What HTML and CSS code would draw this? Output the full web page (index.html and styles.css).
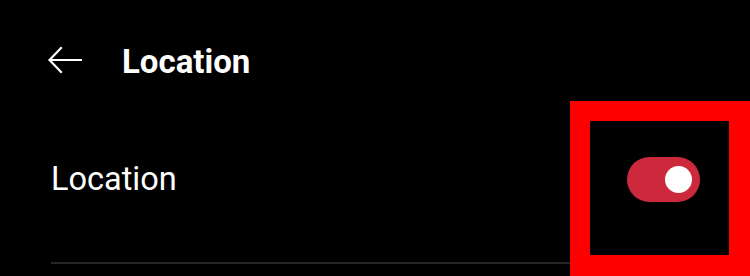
FILE: index.html
```html
<!DOCTYPE html>
<html>
<head>
<meta charset="utf-8">
<link rel="stylesheet" href="styles.css">
</head>
<body>
<div class="screen">
  <header class="topbar">
    <svg class="back" width="34" height="28" viewBox="0 0 34 28" fill="none" stroke="#fff" stroke-width="2.2" stroke-linecap="square">
      <path d="M2 14 H33"/>
      <path d="M13 2 L1.5 14 L13 26"/>
    </svg>
    <h1 class="title">Location</h1>
  </header>
  <div class="list">
    <div class="row">
      <span class="label">Location</span>
      <div class="switch on"><div class="knob"></div></div>
    </div>
    <div class="divider"></div>
  </div>
  <div class="highlight"></div>
</div>
</body>
</html>
```
FILE: styles.css
```css
html, body {
  margin: 0;
  padding: 0;
  background: #000;
}
.screen {
  position: relative;
  width: 750px;
  height: 276px;
  overflow: hidden;
  font-family: Roboto, "Liberation Sans", sans-serif;
  color: #fff;
}
.topbar {
  height: 120px;
  display: flex;
  align-items: center;
  padding-left: 48px;
  box-sizing: border-box;
}
.back {
  display: block;
  margin-right: 40px;
}
.title {
  margin: 0;
  font-size: 33px;
  font-weight: 700;
  line-height: 1;
  padding-top: 2px;
}
.list {
  padding: 0 50px 0 51px;
}
.row {
  height: 120px;
  display: flex;
  align-items: center;
  justify-content: space-between;
}
.label {
  font-size: 32.5px;
  font-weight: 400;
  line-height: 1;
  padding-bottom: 2px;
}
.switch {
  width: 73px;
  height: 45px;
  border-radius: 23px;
  background: #cc2a3c;
  display: flex;
  align-items: center;
  justify-content: flex-end;
  padding-right: 8px;
  box-sizing: border-box;
  margin-top: -2px;
}
.knob {
  width: 27px;
  height: 27px;
  border-radius: 50%;
  background: #fff;
}
.divider {
  margin-top: 22px;
  height: 2px;
  background: #262626;
}
.highlight {
  position: absolute;
  left: 570px;
  top: 101px;
  width: 180px;
  height: 175px;
  border: 20px solid #ff0000;
  border-right-width: 21px;
  border-bottom-width: 21px;
  box-sizing: border-box;
}
```
